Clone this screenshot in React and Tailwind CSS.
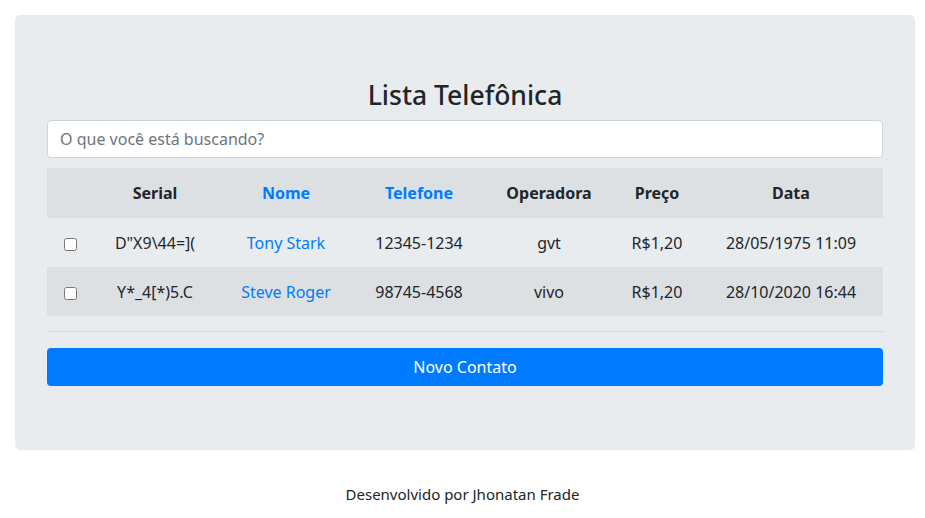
export default function App() {
  const rows = [
    { serial: 'D"X9\\44=](', nome: "Tony Stark", tel: "12345-1234", op: "gvt", preco: "R$1,20", data: "28/05/1975 11:09" },
    { serial: "Y*_4[*)5.C", nome: "Steve Roger", tel: "98745-4568", op: "vivo", preco: "R$1,20", data: "28/10/2020 16:44" },
  ];
  return (
    <div className="min-h-[518px] bg-white text-[#212529] text-base" style={{ fontFamily: '"Noto Sans", "Open Sans", sans-serif' }}>
      <div className="pt-[15px] pl-[15px]">
        <div className="w-[900px] bg-[#e9ecef] rounded-[5px] px-8 pt-16 pb-16">
          <h3 className="text-[26.5px] font-medium h-[33px] leading-[33px] text-center mb-2">Lista Telefônica</h3>
          <input
            className="block w-full h-[38px] bg-white border border-[#ced4da] rounded px-3 text-base text-[#495057] placeholder:text-[#6c757d] outline-none"
            placeholder="O que você está buscando?"
          />
          <table className="w-full mt-[10px] border-collapse table-fixed text-center">
            <colgroup>
              <col className="w-[46px]" />
              <col className="w-[124px]" />
              <col className="w-[138px]" />
              <col className="w-[128px]" />
              <col className="w-[132px]" />
              <col className="w-[84px]" />
              <col className="w-[184px]" />
            </colgroup>
            <thead>
              <tr className="bg-[#dde0e3] h-[50px] font-bold">
                <th></th>
                <th className="font-bold">Serial</th>
                <th className="font-bold text-[#007bff]">Nome</th>
                <th className="font-bold text-[#007bff]">Telefone</th>
                <th className="font-bold">Operadora</th>
                <th className="font-bold">Preço</th>
                <th className="font-bold">Data</th>
              </tr>
            </thead>
            <tbody>
              {rows.map((r, i) => (
                <tr key={i} className={i % 2 === 1 ? "bg-[#dde0e3] h-[49px]" : "h-[49px]"}>
                  <td>
                    <input type="checkbox" className="w-[13px] h-[13px] align-middle" />
                  </td>
                  <td>{r.serial}</td>
                  <td className="text-[#007bff]">{r.nome}</td>
                  <td>{r.tel}</td>
                  <td>{r.op}</td>
                  <td>{r.preco}</td>
                  <td>{r.data}</td>
                </tr>
              ))}
            </tbody>
          </table>
          <hr className="mt-[15px] mb-4 border-0 border-t border-[#d2d5d8]" />
          <button className="block w-full h-[38px] bg-[#007bff] text-white rounded text-base">Novo Contato</button>
        </div>
      </div>
      <p className="text-center mt-8 leading-6 text-[15px]">Desenvolvido por Jhonatan Frade</p>
    </div>
  );
}
